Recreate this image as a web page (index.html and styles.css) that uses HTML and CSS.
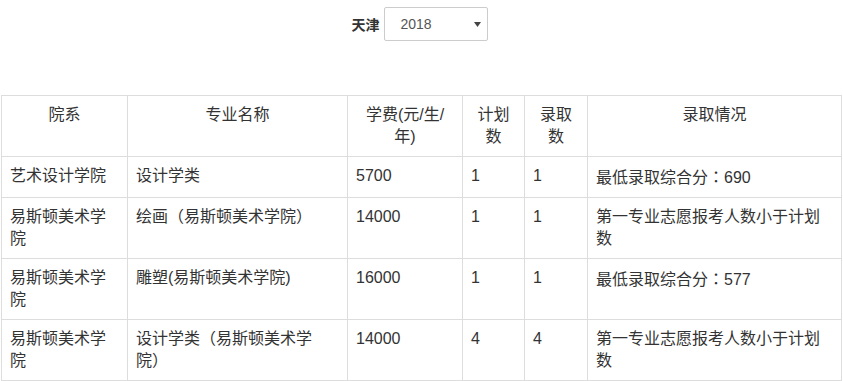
FILE: index.html
```html
<!DOCTYPE html>
<html lang="zh">
<head>
<meta charset="utf-8">
<title>录取情况</title>
<link rel="stylesheet" href="styles.css">
</head>
<body>
<div class="filter">
  <span class="filter-label">天津</span>
  <div class="select">
    <span class="select-value">2018</span>
    <svg class="select-arrow" width="7" height="5" viewBox="0 0 7 5"><path d="M0 0H7L3.5 5Z" fill="#444"/></svg>
  </div>
</div>
<table class="score-table">
  <colgroup>
    <col class="c1"><col class="c2"><col class="c3"><col class="c4"><col class="c5"><col class="c6">
  </colgroup>
  <thead>
    <tr>
      <th>院系</th>
      <th>专业名称</th>
      <th>学费(元/生/年)</th>
      <th>计划数</th>
      <th>录取数</th>
      <th>录取情况</th>
    </tr>
  </thead>
  <tbody>
    <tr>
      <td>艺术设计学院</td>
      <td>设计学类</td>
      <td>5700</td>
      <td>1</td>
      <td>1</td>
      <td>最低录取综合分<span class="punct" lang="zh-TW">：</span>690</td>
    </tr>
    <tr>
      <td>易斯顿美术学院</td>
      <td>绘画（易斯顿美术学院）</td>
      <td>14000</td>
      <td>1</td>
      <td>1</td>
      <td>第一专业志愿报考人数小于计划数</td>
    </tr>
    <tr>
      <td>易斯顿美术学院</td>
      <td>雕塑(易斯顿美术学院)</td>
      <td>16000</td>
      <td>1</td>
      <td>1</td>
      <td>最低录取综合分<span class="punct" lang="zh-TW">：</span>577</td>
    </tr>
    <tr>
      <td>易斯顿美术学院</td>
      <td>设计学类（易斯顿美术学院）</td>
      <td>14000</td>
      <td>4</td>
      <td>4</td>
      <td>第一专业志愿报考人数小于计划数</td>
    </tr>
  </tbody>
</table>
</body>
</html>
```
FILE: styles.css
```css
html, body {
  margin: 0;
  padding: 0;
  background: #fff;
}
body {
  font-family: "Liberation Sans", "Noto Sans CJK SC", sans-serif;
  color: #333;
  text-spacing-trim: space-all;
}
.filter {
  display: flex;
  justify-content: center;
  align-items: center;
  gap: 4px;
  padding-top: 7px;
  padding-right: 4px;
}
.filter-label {
  font-size: 14px;
  font-weight: bold;
  color: #333;
}
.select {
  box-sizing: border-box;
  width: 104px;
  height: 34px;
  border: 1px solid #ccc;
  border-radius: 2px;
  display: flex;
  align-items: center;
  justify-content: space-between;
  padding: 0 6px 0 16px;
  font-size: 14px;
  color: #555;
}
.select-arrow {
  display: block;
}
.score-table {
  margin: 54px 0 0 1px;
  border-collapse: collapse;
  table-layout: fixed;
  width: 840px;
  font-size: 16px;
  line-height: 22px;
}
.c1 { width: 126px; }
.c2 { width: 220px; }
.c3 { width: 115px; }
.c4 { width: 62px; }
.c5 { width: 63px; }
.c6 { width: 254px; }
.score-table th,
.score-table td {
  border: 1px solid #ddd;
  padding: 8px;
  vertical-align: top;
  text-align: left;
  font-weight: normal;
}
.score-table th {
  text-align: center;
}
.punct {
  font-family: "Noto Sans CJK TC", sans-serif;
}
```
